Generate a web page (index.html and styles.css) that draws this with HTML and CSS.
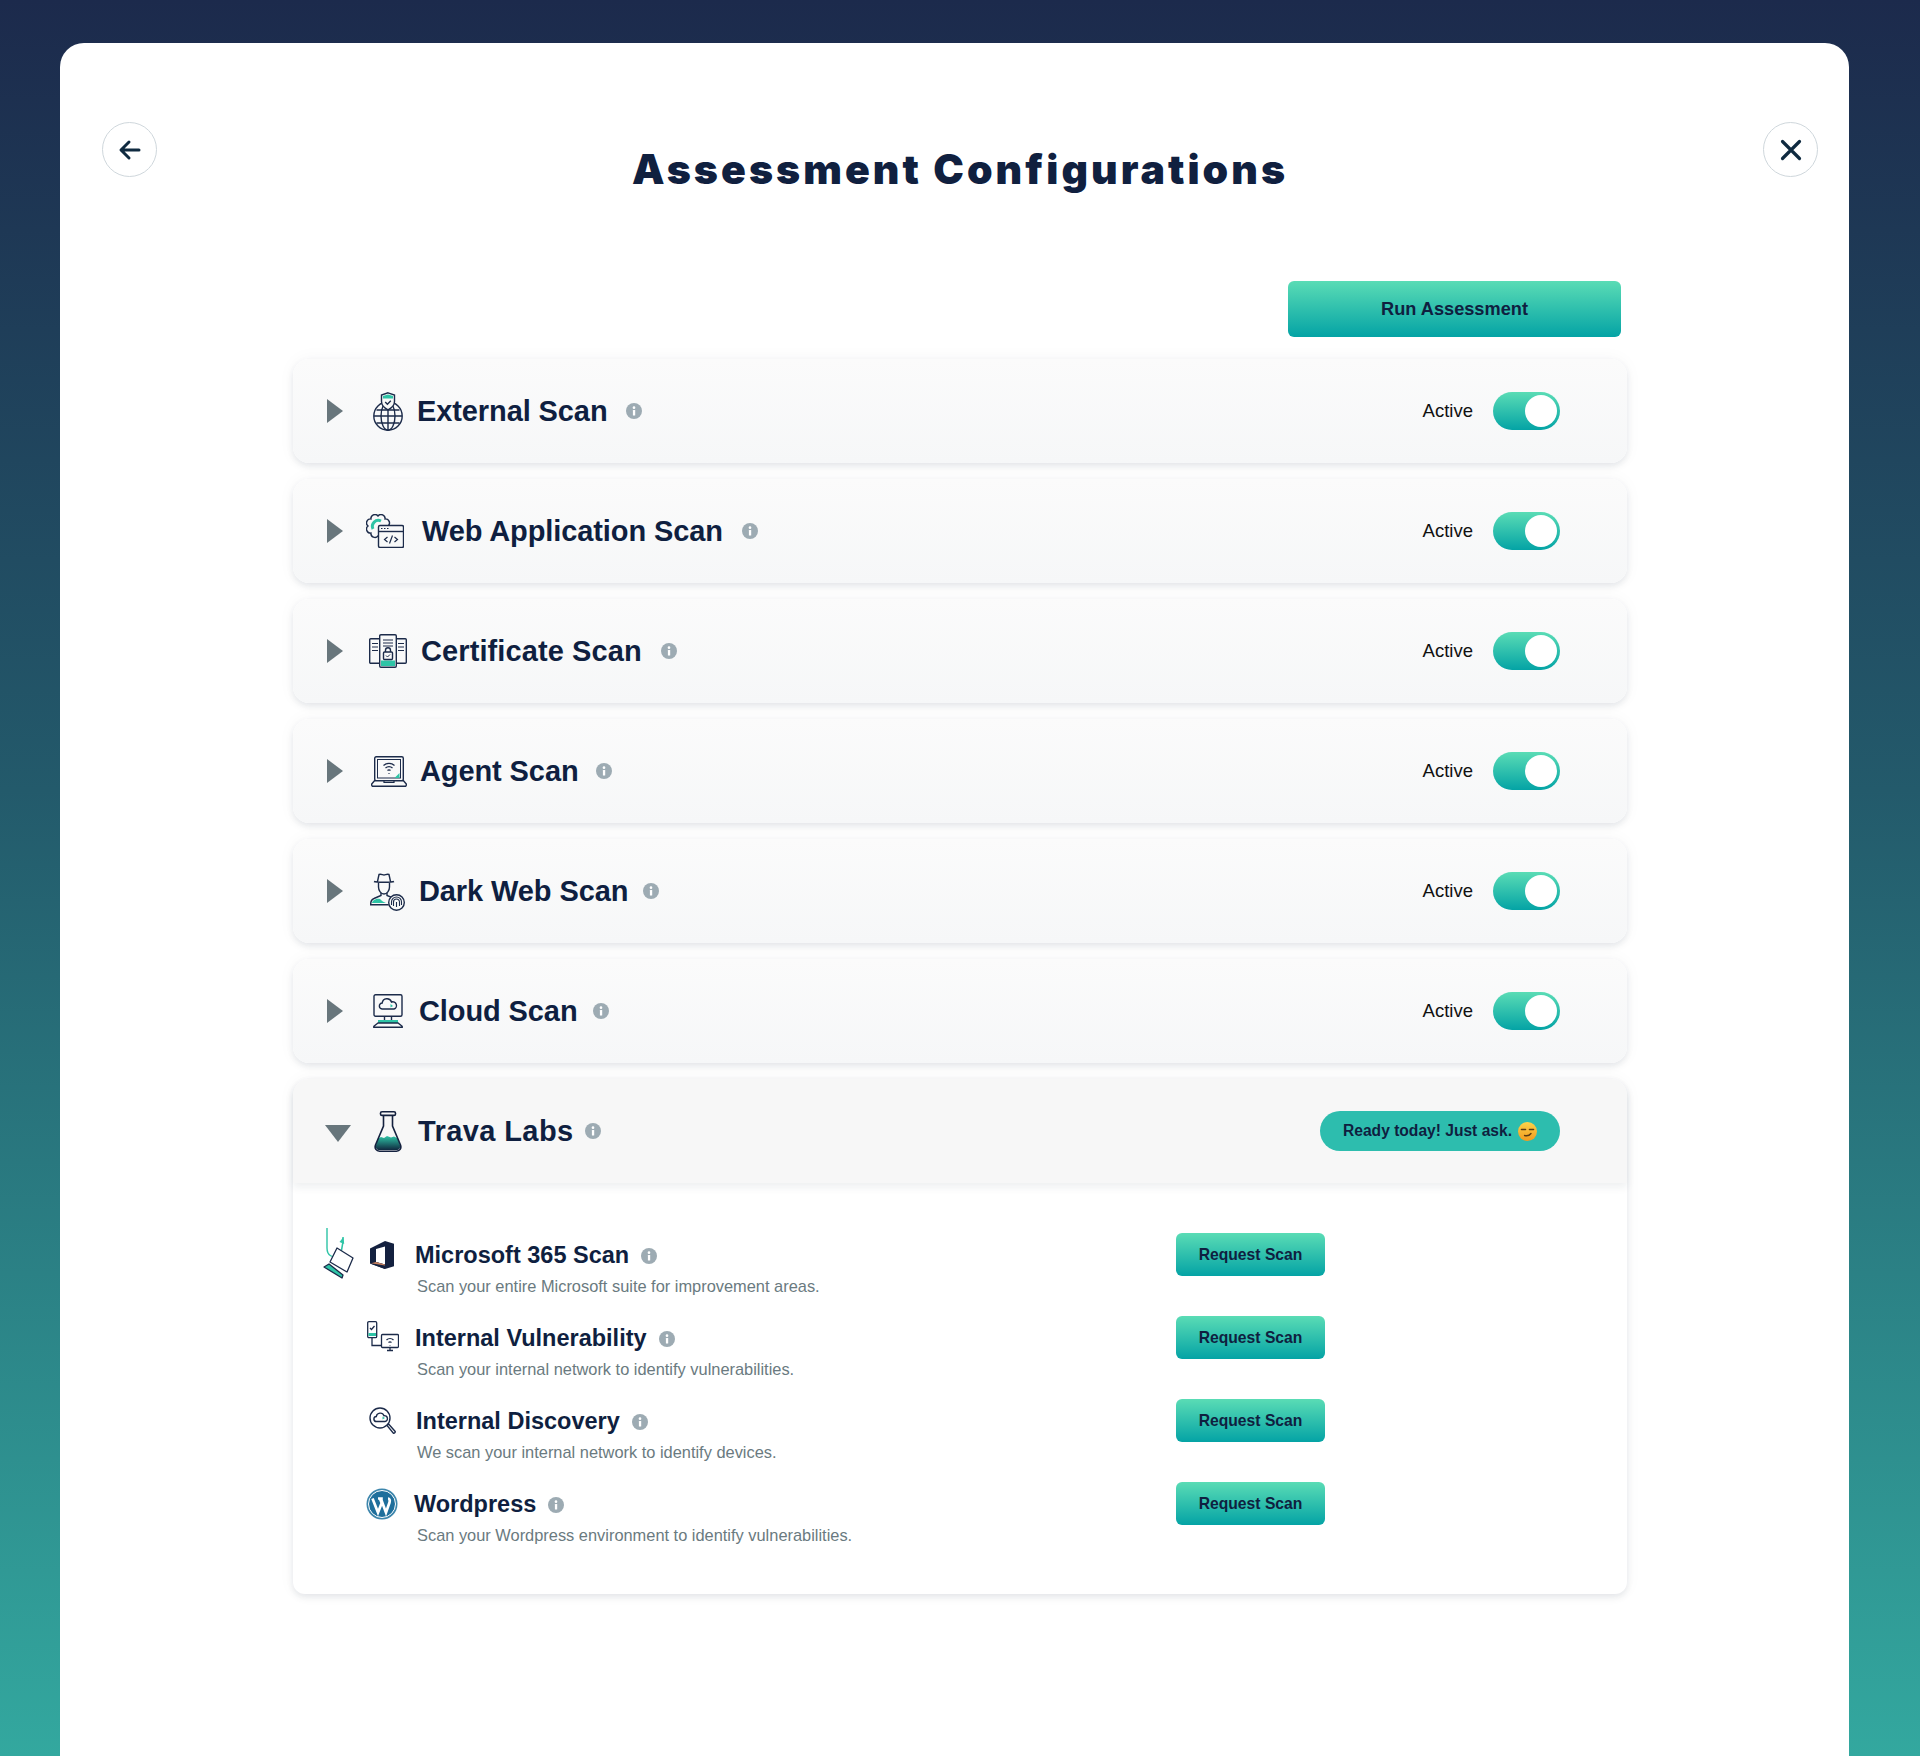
FILE: index.html
```html
<!DOCTYPE html>
<html lang="en">
<head>
    <meta charset="UTF-8">
    <meta name="viewport" content="width=device-width, initial-scale=1.0">
    <title>Assessment Configurations</title>
    <link rel="stylesheet" href="styles.css">
</head>
<body>
    <svg class="defs" width="0" height="0">
        <symbol id="info" viewBox="0 0 16 16">
            <circle cx="8" cy="8" r="8" fill="#9dabb3"/>
            <rect x="6.900" y="7" width="2.300" height="5.600" rx="0.400" fill="#fff"/>
            <circle cx="8" cy="4.700" r="1.350" fill="#fff"/>
        </symbol>
    </svg>
    <main class="modal">
        <header class="modalHead">
            <button class="roundButton">
                <svg width="24" height="24" viewBox="0 0 24 24"><path d="M21 12H4M11 4l-8 8 8 8" fill="none" stroke="#0f2a40" stroke-width="3" stroke-linecap="round" stroke-linejoin="round"/></svg>
            </button>
            <h1 class="pageTitle">Assessment Configurations</h1>
            <button class="roundButton">
                <svg width="24" height="24" viewBox="0 0 24 24"><path d="M3.500 3.500l17 17M20.500 3.500l-17 17" fill="none" stroke="#0f2a40" stroke-width="3.200" stroke-linecap="round"/></svg>
            </button>
        </header>
        <div class="content">
            <div class="runRow"><button class="gradButton runButton">Run Assessment</button></div>

            <section class="scanCard external">
                <span class="arrow"></span>
                <svg class="scanIcon" width="30" height="39" viewBox="0 0 30 39" fill="none" stroke="#1c2b4a" stroke-width="1.400">
                    <circle cx="15" cy="24" r="14.200"/>
                    <ellipse cx="15" cy="24" rx="7" ry="14.200"/>
                    <path d="M15 10v28M1 24h28M3.500 18h23M3.500 31h23"/>
                    <path d="M15 .8l6.500 2.200v6.400c0 4-3 6.600-6.500 8.400-3.500-1.800-6.500-4.400-6.500-8.400V3z" fill="#f8f9f9"/>
                    <path d="M10 4l5-1.600L20 4v2.600H10z" fill="#2ec4a6" stroke="none"/>
                    <path d="M12.200 10l2.200 2.200 3.400-3.400"/>
                </svg>
                <h2 class="scanName">External Scan</h2>
                <svg class="infoIcon"><use href="#info"/></svg>
                <span class="activeLabel">Active</span>
                <span class="toggle"><span class="knob"></span></span>
            </section>

            <section class="scanCard webApp">
                <span class="arrow"></span>
                <svg class="scanIcon" width="38" height="34" viewBox="0 0 38 34" fill="none" stroke="#1c2b4a" stroke-width="1.400">
                    <path d="M22 12A4 4 0 0 1 19.070 19.070 4 4 0 0 1 12 22 4 4 0 0 1 4.930 19.070 4 4 0 0 1 2 12 4 4 0 0 1 4.930 4.930 4 4 0 0 1 12 2 4 4 0 0 1 19.070 4.930 4 4 0 0 1 22 12Z"/>
                    <path d="M7 15a6 6 0 0 1 8-8" stroke="#2ec4a6" stroke-width="3"/>
                    <rect x="12.500" y="11.500" width="25" height="22" rx="1.500" fill="#f8f9f9"/>
                    <path d="M12.500 17.500h25"/>
                    <path d="M15 14.500h1.500M18 14.500h1.500M21 14.500h1.500" stroke-width="1"/>
                    <path d="M21.500 23l-3 2.500 3 2.500M28.500 23l3 2.500-3 2.500M26.500 21.500l-3 8" stroke-width="1.200"/>
                </svg>
                <h2 class="scanName">Web Application Scan</h2>
                <svg class="infoIcon"><use href="#info"/></svg>
                <span class="activeLabel">Active</span>
                <span class="toggle"><span class="knob"></span></span>
            </section>

            <section class="scanCard certificate">
                <span class="arrow"></span>
                <svg class="scanIcon" width="38" height="34" viewBox="0 0 38 34" fill="none" stroke="#1c2b4a" stroke-width="1.400">
                    <rect x=".7" y="4.700" width="36.600" height="24.600" rx="1"/>
                    <rect x="10.700" y=".7" width="16.600" height="32.600" rx="1.200" fill="#f8f9f9"/>
                    <rect x="12" y="26.500" width="14" height="5.500" fill="#2ec4a6" stroke="none"/>
                    <path d="M14 6h10M14 9h10M14 12h10M3 9.500h6M3 13h6M3 16.500h6M29 9.500h6M29 13h6M29 16.500h6" stroke-width="1.100"/>
                    <rect x="14.500" y="18" width="9" height="7.500" rx="1"/>
                    <path d="M16.500 18v-1.800a2.500 2.500 0 0 1 5 0V18"/>
                    <path d="M17 21.500l1.500 1.500 2.500-2.500" stroke-width="1"/>
                </svg>
                <h2 class="scanName">Certificate Scan</h2>
                <svg class="infoIcon"><use href="#info"/></svg>
                <span class="activeLabel">Active</span>
                <span class="toggle"><span class="knob"></span></span>
            </section>

            <section class="scanCard agent">
                <span class="arrow"></span>
                <svg class="scanIcon" width="36" height="31" viewBox="0 0 36 31" fill="none" stroke="#1c2b4a" stroke-width="1.400">
                    <rect x="3.700" y=".7" width="28.600" height="24" rx="1.500"/>
                    <rect x="6.500" y="3.500" width="23" height="18.500" stroke-width="1"/>
                    <path d="M23.500 22l5-5v5z" fill="#2ec4a6" stroke="none"/>
                    <path d="M12.500 9.500a8 8 0 0 1 11 0M14.500 12a5 5 0 0 1 7 0M16.500 14.500a2 2 0 0 1 3 0" stroke-width="1.200"/>
                    <path d="M18 17v.8" stroke-width="1.400"/>
                    <path d="M3.500 24.700L.7 28v1a1.300 1.300 0 0 0 1.300 1.300h32a1.300 1.300 0 0 0 1.300-1.300v-1l-2.800-3.300z" fill="#f8f9f9"/>
                    <path d="M13 25v1.500h10V25" stroke-width="1.200"/>
                </svg>
                <h2 class="scanName">Agent Scan</h2>
                <svg class="infoIcon"><use href="#info"/></svg>
                <span class="activeLabel">Active</span>
                <span class="toggle"><span class="knob"></span></span>
            </section>

            <section class="scanCard darkWeb">
                <span class="arrow"></span>
                <svg class="scanIcon" width="35" height="39" viewBox="0 0 35 39" fill="none" stroke="#1c2b4a" stroke-width="1.400">
                    <path d="M4 9.500c2 1 18 1 20 0M7.500 9.500L9 2.500c2-1 3.500 .5 5 .5s3-1.500 5-.5l1.500 7"/>
                    <path d="M8.500 11v4c0 3.500 2.500 7 5.500 7s5.500-3.500 5.500-7v-4"/>
                    <path d="M11 21v2.500l-7 3c-2.500 1-3.300 3-3.300 5.500v.7h18M17 21v2.500l4 1.700"/>
                    <path d="M2 31c.5-3 5-5 8-4 1.500 2 4 3 6 4z" fill="#2ec4a6" stroke="none"/>
                    <circle cx="26.500" cy="30.500" r="7.800" fill="#f8f9f9"/>
                    <path d="M21.500 33v-3a5 5 0 0 1 10 0v3M23.500 34v-4a3 3 0 0 1 6 0v4M26.500 35v-5" stroke-width="1.100"/>
                </svg>
                <h2 class="scanName">Dark Web Scan</h2>
                <svg class="infoIcon"><use href="#info"/></svg>
                <span class="activeLabel">Active</span>
                <span class="toggle"><span class="knob"></span></span>
            </section>

            <section class="scanCard cloud">
                <span class="arrow"></span>
                <svg class="scanIcon" width="30" height="34" viewBox="0 0 30 34" fill="none" stroke="#1c2b4a" stroke-width="1.400">
                    <rect x="1" y=".7" width="28" height="21.600" rx="1.500"/>
                    <path d="M9.500 15a3 3 0 0 1-.3-6 4.800 4.800 0 0 1 9.300-1 3.500 3.500 0 0 1 2.500 7z"/>
                    <path d="M17.500 10l2.500 2-2.500 1.500z" fill="#2ec4a6" stroke="none"/>
                    <path d="M11.500 22.500v4M18.500 22.500v4"/>
                    <rect x="5" y="26" width="20" height="3" fill="#2ec4a6" stroke="none"/>
                    <path d="M5 29L.8 32.300v1h28.400v-1L25 29z" fill="#f8f9f9"/>
                </svg>
                <h2 class="scanName">Cloud Scan</h2>
                <svg class="infoIcon"><use href="#info"/></svg>
                <span class="activeLabel">Active</span>
                <span class="toggle"><span class="knob"></span></span>
            </section>

            <section class="labsPanel">
                <div class="scanCard labs">
                    <span class="arrow arrowDown"></span>
                    <svg class="scanIcon" width="28" height="41" viewBox="0 0 28 41" fill="none" stroke="#14213f" stroke-width="1.600">
                        <defs>
                            <linearGradient id="liquid" x1="0" y1="0" x2="0" y2="1">
                                <stop offset="0" stop-color="#2ec4a6"/>
                                <stop offset="1" stop-color="#10283f"/>
                            </linearGradient>
                        </defs>
                        <path d="M4 27.500l3-1.500 3 1 3-2 4 1.500 3-1 4 2 2 6.500c.7 3-.8 5-3.500 5H5.500C2.800 39 1.300 37 2 34z" fill="url(#liquid)" stroke="none"/>
                        <rect x="6.500" y=".8" width="15" height="3.600" rx="1.500"/>
                        <path d="M9.500 4.400V15L1.500 34c-1.200 3.500 .8 6.200 4 6.200h17c3.200 0 5.200-2.700 4-6.200L18.500 15V4.400"/>
                    </svg>
                    <h2 class="scanName">Trava Labs</h2>
                    <svg class="infoIcon"><use href="#info"/></svg>
                    <span class="readyBadge">Ready today! Just ask.
                        <svg class="smirk" width="19" height="19" viewBox="0 0 19 19">
                            <defs>
                                <linearGradient id="face" x1="0" y1="0" x2="0" y2="1">
                                    <stop offset="0" stop-color="#fcd34a"/>
                                    <stop offset="1" stop-color="#f29a1e"/>
                                </linearGradient>
                            </defs>
                            <circle cx="9.500" cy="9.500" r="9.500" fill="url(#face)"/>
                            <path d="M3.500 7.500h4M11.500 7.500h4" stroke="#5b3a12" stroke-width="1.600" stroke-linecap="round"/>
                            <path d="M6.500 13.500c2.500 .6 5 0 6.500-2" fill="none" stroke="#5b3a12" stroke-width="1.300" stroke-linecap="round"/>
                        </svg>
                    </span>
                </div>
                <div class="labsBody">
                    <svg class="driftIcon" width="32" height="56" viewBox="0 0 32 56" fill="none" stroke="#1c2b4a" stroke-width="1.300" stroke-linejoin="round">
                        <path d="M4 2v20c0 8 6 10 11 8 3-2 5-10 5-19" stroke="#2ec4a6" stroke-width="1.400"/>
                        <path d="M16.500 16l4-5 .7 7z" fill="#2ec4a6" stroke="none"/>
                        <path d="M14 22l16 10-6 14-17-10z" fill="#fff"/>
                        <path d="M1 41l5-3 14 11-1 3z" fill="#2ec4a6"/>
                    </svg>

                    <div class="labRow">
                        <svg class="labIcon msIcon" width="24" height="28" viewBox="0 0 24 28">
                            <path d="M0 7.500L15 0l9 2.800v22.400L15 28 0 22.500z" fill="#14213f"/>
                            <path d="M6 8v13l9 2.500V5.500z" fill="#fff"/>
                            <path d="M0 22.500L6 21l9 2.500V28z" fill="#14213f"/>
                            <path d="M1 22.300L6 21l9 2.500v1z" fill="#c9825f"/>
                        </svg>
                        <h3 class="labName">Microsoft 365 Scan<svg class="infoIcon"><use href="#info"/></svg></h3>
                        <p class="labDesc">Scan your entire Microsoft suite for improvement areas.</p>
                        <button class="gradButton requestButton">Request Scan</button>
                    </div>

                    <div class="labRow">
                        <svg class="labIcon vulnIcon" width="32" height="31" viewBox="0 0 32 31" fill="none" stroke="#1c2b4a" stroke-width="1.300">
                            <rect x=".7" y=".7" width="9" height="16" rx="1.200"/>
                            <rect x="1.500" y="12" width="7.500" height="3" fill="#2ec4a6" stroke="none"/>
                            <path d="M3 7l1.500 1.500L7.500 5"/>
                            <path d="M5 17v7.500h9.500"/>
                            <rect x="14.500" y="13.500" width="17" height="13" rx="1"/>
                            <path d="M19.500 19a5 5 0 0 1 7 0M21.500 21.500a2.500 2.500 0 0 1 3 0M23 24v.6M20 29.500h6M23 26.500v3"/>
                        </svg>
                        <h3 class="labName">Internal Vulnerability<svg class="infoIcon"><use href="#info"/></svg></h3>
                        <p class="labDesc">Scan your internal network to identify vulnerabilities.</p>
                        <button class="gradButton requestButton">Request Scan</button>
                    </div>

                    <div class="labRow">
                        <svg class="labIcon discIcon" width="27" height="28" viewBox="0 0 27 28" fill="none" stroke="#1c2b4a" stroke-width="1.400">
                            <circle cx="11" cy="11" r="10"/>
                            <path d="M7.500 14.500a2.500 2.500 0 0 1-.2-5 4 4 0 0 1 7.700-.8 2.900 2.900 0 0 1 1 5.800z"/>
                            <path d="M13.500 9.500l2.500 1.500-2.500 1.500z" fill="#2ec4a6" stroke="none"/>
                            <path d="M18 18.500l1.800-1.300 6.200 7c.8 1-.8 2.700-1.800 1.800z"/>
                        </svg>
                        <h3 class="labName">Internal Discovery<svg class="infoIcon"><use href="#info"/></svg></h3>
                        <p class="labDesc">We scan your internal network to identify devices.</p>
                        <button class="gradButton requestButton">Request Scan</button>
                    </div>

                    <div class="labRow">
                        <svg class="labIcon wpIcon" width="32" height="32" viewBox="0 0 32 32">
                            <circle cx="16" cy="16" r="15.500" fill="#3d86ac"/>
                            <circle cx="16" cy="16" r="13.500" fill="#1f6f9c" stroke="#fff" stroke-width="1"/>
                            <path d="M6.500 10.500L12 24.500l3.700-9.500-1.800-4.500M12 10.500h4.800M14.800 10.500l5.200 14 3.500-10c.8-2.300-.3-4-1.500-4" fill="none" stroke="#fff" stroke-width="2.700"/>
                        </svg>
                        <h3 class="labName">Wordpress<svg class="infoIcon"><use href="#info"/></svg></h3>
                        <p class="labDesc">Scan your Wordpress environment to identify vulnerabilities.</p>
                        <button class="gradButton requestButton">Request Scan</button>
                    </div>
                </div>
            </section>
        </div>
    </main>
</body>
</html>
```

FILE: styles.css
```css
html,body{
    margin: 0;
    padding: 0;
    height: 1756px;
    overflow: hidden;
}
body{
    box-sizing: border-box;
    padding: 43px 71px 0 60px;
    background: linear-gradient(180deg, #1c2a4c 0%, #235a6b 45%, #33a89f 100%);
    font-family: "Liberation Sans", Arial, sans-serif;
    color: #0f1f40;
}
.defs{
    position: absolute;
}
button{
    font-family: inherit;
    border: none;
    cursor: pointer;
}
h1,h2,h3,p{
    margin: 0;
}

.modal{
    height: 1713px;
    background-color: #fff;
    border-radius: 24px 24px 0 0;
}
.modalHead{
    display: flex;
    justify-content: space-between;
    align-items: flex-start;
    padding: 79px 31px 0 42px;
}
.roundButton{
    width: 55px;
    height: 55px;
    padding: 0;
    display: flex;
    align-items: center;
    justify-content: center;
    background-color: #fff;
    border: 1.500px solid #cfd7dc;
    border-radius: 50%;
}
.pageTitle{
    margin-top: 22px;
    font-family: Inter, "Liberation Sans", sans-serif;
    font-size: 41px;
    line-height: 50px;
    font-weight: 900;
    letter-spacing: 3.050px;
    color: #10203f;
}

.content{
    width: 1334px;
    margin-left: 233px;
}
.runRow{
    display: flex;
    justify-content: flex-end;
    padding-right: 6px;
    margin-top: 87px;
    margin-bottom: 22px;
}
.gradButton{
    color: #0f1f40;
    font-weight: bold;
    background: linear-gradient(180deg, #5adcb5 0%, #04a3a5 100%);
    border-radius: 6px;
}
.runButton{
    width: 333px;
    height: 56px;
    font-size: 18.200px;
}
.requestButton{
    grid-column: 3;
    grid-row: 1 / span 2;
    align-self: start;
    width: 149px;
    height: 43px;
    padding: 0;
    font-size: 15.700px;
}

.scanCard{
    display: flex;
    align-items: center;
    height: 104px;
    margin-bottom: 16px;
    padding: 0 67px 0 34px;
    box-sizing: border-box;
    background: linear-gradient(180deg, #fbfbfb 0%, #f6f7f8 100%);
    border-radius: 16px;
    box-shadow: 0 3px 6px rgba(30, 50, 70, .1), 0 0 18px rgba(30, 50, 70, .04);
}
.arrow{
    width: 0;
    height: 0;
    border-left: 16px solid #68767c;
    border-top: 12px solid transparent;
    border-bottom: 12px solid transparent;
}
.arrowDown{
    margin-left: -2px;
    margin-top: 4px;
    border-left: 13px solid transparent;
    border-right: 13px solid transparent;
    border-top: 17px solid #68767c;
    border-bottom: none;
}
.scanName{
    font-size: 29px;
    line-height: 36px;
    font-weight: bold;
    color: #0f1f40;
    letter-spacing: -.1px;
}
.infoIcon{
    width: 16px;
    height: 16px;
    flex: none;
}
.activeLabel{
    margin-left: auto;
    margin-right: 20px;
    font-size: 18.500px;
    color: #111;
}
.toggle{
    width: 67px;
    height: 38px;
    display: flex;
    align-items: center;
    justify-content: flex-end;
    padding-right: 3px;
    box-sizing: border-box;
    background: linear-gradient(180deg, #5adcb5 0%, #04a3a5 100%);
    border-radius: 19px;
}
.knob{
    width: 32px;
    height: 32px;
    background-color: #fff;
    border-radius: 50%;
}

/* every row has its own icon size, so the gaps are set per row */
.external .scanIcon{ margin-left: 30px; margin-right: 14px; }
.external .infoIcon{ margin-left: 18px; }
.webApp .scanIcon{ margin-left: 23px; margin-right: 18px; }
.webApp .infoIcon{ margin-left: 19px; }
.certificate .scanIcon{ margin-left: 26px; margin-right: 14px; }
.certificate .scanName{ letter-spacing: .1px; }
.certificate .infoIcon{ margin-left: 19px; }
.agent .scanIcon{ margin-left: 28px; margin-right: 13px; }
.agent .infoIcon{ margin-left: 17px; }
.darkWeb .scanIcon{ margin-left: 27px; margin-right: 14px; }
.darkWeb .infoIcon{ margin-left: 15px; }
.cloud .scanIcon{ margin-left: 30px; margin-right: 16px; }
.cloud .infoIcon{ margin-left: 15px; }
.labs .scanIcon{ margin-left: 23px; margin-right: 16px; }
.labs .scanName{ letter-spacing: .4px; }
.labs .infoIcon{ margin-left: 11px; }

.labsPanel{
    height: 515px;
    background-color: #fff;
    border-radius: 16px 16px 12px 12px;
    box-shadow: 0 3px 6px rgba(30, 50, 70, .1), 0 0 18px rgba(30, 50, 70, .04);
}
.labs{
    position: relative;
    margin-bottom: 0;
    background: #f7f7f7;
    border-radius: 16px 16px 0 0;
    box-shadow: 0 4px 8px rgba(30, 50, 70, .08);
}
.readyBadge{
    margin-left: auto;
    display: flex;
    align-items: center;
    gap: 6px;
    width: 240px;
    height: 40px;
    padding-left: 23px;
    box-sizing: border-box;
    font-size: 15.600px;
    font-weight: bold;
    color: #0f1f40;
    background-color: #2dbdae;
    border-radius: 20px;
}
.labsBody{
    position: relative;
    padding: 50px 0 0 73px;
}
.driftIcon{
    position: absolute;
    left: 30px;
    top: 43px;
}
.labRow{
    display: grid;
    grid-template-columns: 49px 761px 149px;
    grid-template-rows: 44px 18px;
    margin-bottom: 21px;
}
.labIcon{
    grid-column: 1;
    grid-row: 1;
    align-self: center;
}
.msIcon{ margin-left: 4px; }
.vulnIcon{ margin-left: 1px; margin-top: -3px; }
.discIcon{ margin-left: 3px; }
.discIcon + .labName{ margin-left: 1px; }
.wpIcon + .labName{ margin-left: -1px; }
.labName{
    display: flex;
    align-items: center;
    gap: 12px;
    padding-top: 1px;
    font-size: 23.500px;
    line-height: 43px;
    font-weight: bold;
    color: #0f1f40;
}
.labDesc{
    grid-column: 2;
    margin-left: 2px;
    font-size: 16.400px;
    line-height: 18px;
    color: #6a7a80;
}
```
